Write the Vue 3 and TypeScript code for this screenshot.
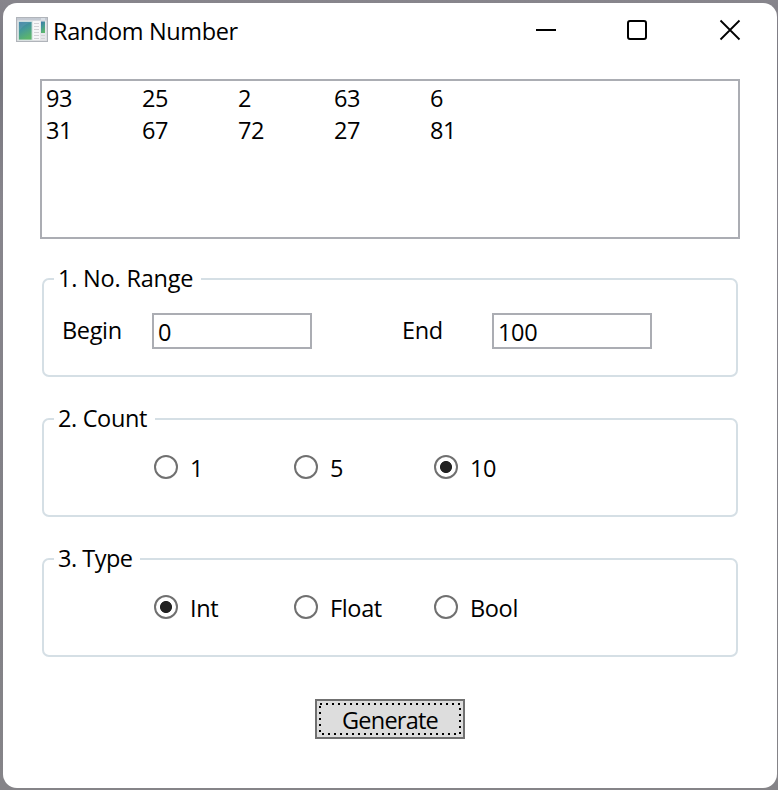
<script setup lang="ts">
import { ref } from 'vue'

const rows = ref<number[][]>([
  [93, 25, 2, 63, 6],
  [31, 67, 72, 27, 81],
])
const begin = ref('0')
const end = ref('100')
const count = ref('10')
const kind = ref('Int')
const counts = ['1', '5', '10']
const kinds = ['Int', 'Float', 'Bool']

function draw(): number | string {
  const lo = Number(begin.value)
  const hi = Number(end.value)
  const value = lo + Math.random() * (hi - lo)
  if (kind.value === 'Bool') return Math.random() < 0.5 ? 0 : 1
  return kind.value === 'Float' ? value.toFixed(2) : Math.floor(value)
}

function generate() {
  const values = Array.from({ length: Number(count.value) }, () => Number(draw()))
  rows.value = [values.slice(0, 5), values.slice(5)]
}
</script>

<template>
  <div class="desktop">
    <main class="window">
      <header class="titlebar">
        <svg class="app-icon" width="32" height="26" viewBox="0 0 32 26">
          <defs>
            <linearGradient id="pane" x1="0" y1="0" x2="0.4" y2="1">
              <stop offset="0" stop-color="#3c76a6" />
              <stop offset="0.5" stop-color="#459a98" />
              <stop offset="1" stop-color="#5cb56c" />
            </linearGradient>
            <linearGradient id="frame" x1="0" y1="0" x2="0" y2="1">
              <stop offset="0" stop-color="#c3c9d2" />
              <stop offset="1" stop-color="#d5d6d9" />
            </linearGradient>
          </defs>
          <rect x="0.5" y="0.5" width="31" height="24" fill="url(#frame)" stroke="#b0b4ba" />
          <rect x="1.5" y="3.5" width="29" height="20" fill="#e6e7ea" />
          <rect x="2.5" y="4.5" width="13.5" height="18.5" fill="url(#pane)" stroke="#d7e7e4" stroke-width="0.8" />
          <path d="M3 14 Q9 6 15.5 5.5 V5 H3 Z" fill="#69a7b9" opacity="0.35" />
          <rect x="17" y="4" width="7" height="19" fill="#f7f7f8" />
          <path d="M18 6.5h5M18 9.5h5M18 12.5h5M18 15.5h5M18 18.5h5M18 21.5h5M25 18.5h4M25 21.5h4" stroke="#d2d2d5" stroke-width="1.2" />
          <rect x="25" y="4.5" width="4" height="11.5" fill="url(#pane)" />
          <path d="M25 2h4" stroke="#eef4f8" />
        </svg>
        <h1 class="title">Random Number</h1>
        <svg class="controls" width="206" height="22" viewBox="0 0 206 22" fill="none" stroke="#000">
          <path d="M0 11H20" stroke-width="2" />
          <rect x="92" y="2" width="18" height="18" rx="2" stroke-width="2" />
          <path d="M184.5 1.5L203.5 20.5M203.5 1.5L184.5 20.5" stroke-width="1.8" />
        </svg>
      </header>

      <section class="output">
        <div v-for="(row, i) in rows" :key="i" class="row">
          <span v-for="(value, j) in row" :key="j">{{ value }}</span>
        </div>
      </section>

      <fieldset class="group">
        <legend class="range-legend">1. No. Range</legend>
        <div class="range">
          <label for="begin">Begin</label>
          <input id="begin" v-model="begin" type="text" />
          <label for="end">End</label>
          <input id="end" v-model="end" type="text" />
        </div>
      </fieldset>

      <fieldset class="group">
        <legend class="count-legend">2. Count</legend>
        <div class="options">
          <label v-for="c in counts" :key="c" class="option">
            <input v-model="count" type="radio" name="count" :value="c" />
            <span>{{ c }}</span>
          </label>
        </div>
      </fieldset>

      <fieldset class="group">
        <legend class="type-legend">3. Type</legend>
        <div class="options">
          <label v-for="k in kinds" :key="k" class="option">
            <input v-model="kind" type="radio" name="kind" :value="k" />
            <span>{{ k }}</span>
          </label>
        </div>
      </fieldset>

      <button class="generate" type="button" @click="generate">
        <svg class="focus" width="142" height="32" viewBox="0 0 142 32">
          <rect x="1" y="1" width="140" height="30" fill="none" stroke="#000" stroke-width="2" stroke-dasharray="2 4" />
        </svg>
        <span>Generate</span>
      </button>
    </main>
  </div>
</template>

<style>
body {
  margin: 0;
}
</style>

<style scoped>
.desktop {
  box-sizing: border-box;
  width: 778px;
  height: 790px;
  padding: 3px 1px 2px 3px;
  overflow: hidden;
  background: linear-gradient(180deg, #87858c 0, #77767e 80px, #88868d 200px, #828187 500px, #858488 100%);
}
.window {
  box-sizing: border-box;
  display: flex;
  flex-direction: column;
  height: 785px;
  background: #fff;
  border-radius: 14px;
  color: #000;
  font: 23.5px/32px 'Open Sans', 'Noto Sans', sans-serif;
  letter-spacing: -0.35px;
}
.titlebar {
  display: flex;
  height: 76px;
  padding-left: 13px;
}
.app-icon {
  margin-top: 14px;
}
.title {
  margin: 12px 0 0 5px;
  font: inherit;
  white-space: nowrap;
}
.controls {
  margin: 16px 35px 0 auto;
}
.output {
  box-sizing: border-box;
  height: 160px;
  margin: 0 37px 24px;
  padding: 1px 4px;
  border: 2px solid #abadb3;
}
.row {
  display: grid;
  grid-template-columns: repeat(5, 96px);
}
.group {
  box-sizing: border-box;
  min-width: 0;
  height: 114px;
  margin: 0 39px 26px;
  padding: 0;
  border: 2px solid #d5dfe5;
  border-radius: 7px;
}
legend {
  box-sizing: border-box;
  height: 32px;
  margin-left: 10px;
  padding: 0 0 0 4px;
  line-height: 30px;
  white-space: nowrap;
}
.range-legend {
  width: 147px;
  letter-spacing: -0.2px;
}
.count-legend {
  width: 101px;
}
.type-legend {
  width: 86px;
  letter-spacing: -0.5px;
}
.range {
  display: grid;
  grid-template-columns: 90px 250px 90px 160px;
  padding: 18px 0 0 18px;
}
.range label {
  padding-top: 1px;
}
.range input {
  box-sizing: border-box;
  width: 160px;
  height: 36px;
  padding: 2px 4px 0;
  border: 2px solid #abadb3;
  border-radius: 0;
  background: #fff;
  color: inherit;
  font: inherit;
  letter-spacing: inherit;
  outline: none;
}
.options {
  display: grid;
  grid-template-columns: repeat(3, 140px);
  padding: 16px 0 0 110px;
}
.option {
  display: flex;
}
.option input {
  box-sizing: border-box;
  width: 24px;
  height: 24px;
  margin: 4px 12px 0 0;
  appearance: none;
  border: 2px solid #707070;
  border-radius: 50%;
  background: #fff;
}
.option input:checked {
  background: radial-gradient(circle, #212121 5.6px, #fff 6.4px);
}
.option span {
  margin-top: 1px;
}
.generate {
  position: relative;
  box-sizing: border-box;
  align-self: center;
  width: 150px;
  height: 40px;
  margin: 16px 0 0;
  padding: 2px 0 0;
  border: 2px solid #707070;
  background: #ddd;
  color: inherit;
  font: inherit;
  letter-spacing: -0.75px;
  outline: none;
}
.focus {
  position: absolute;
  top: 2px;
  left: 2px;
}
</style>
